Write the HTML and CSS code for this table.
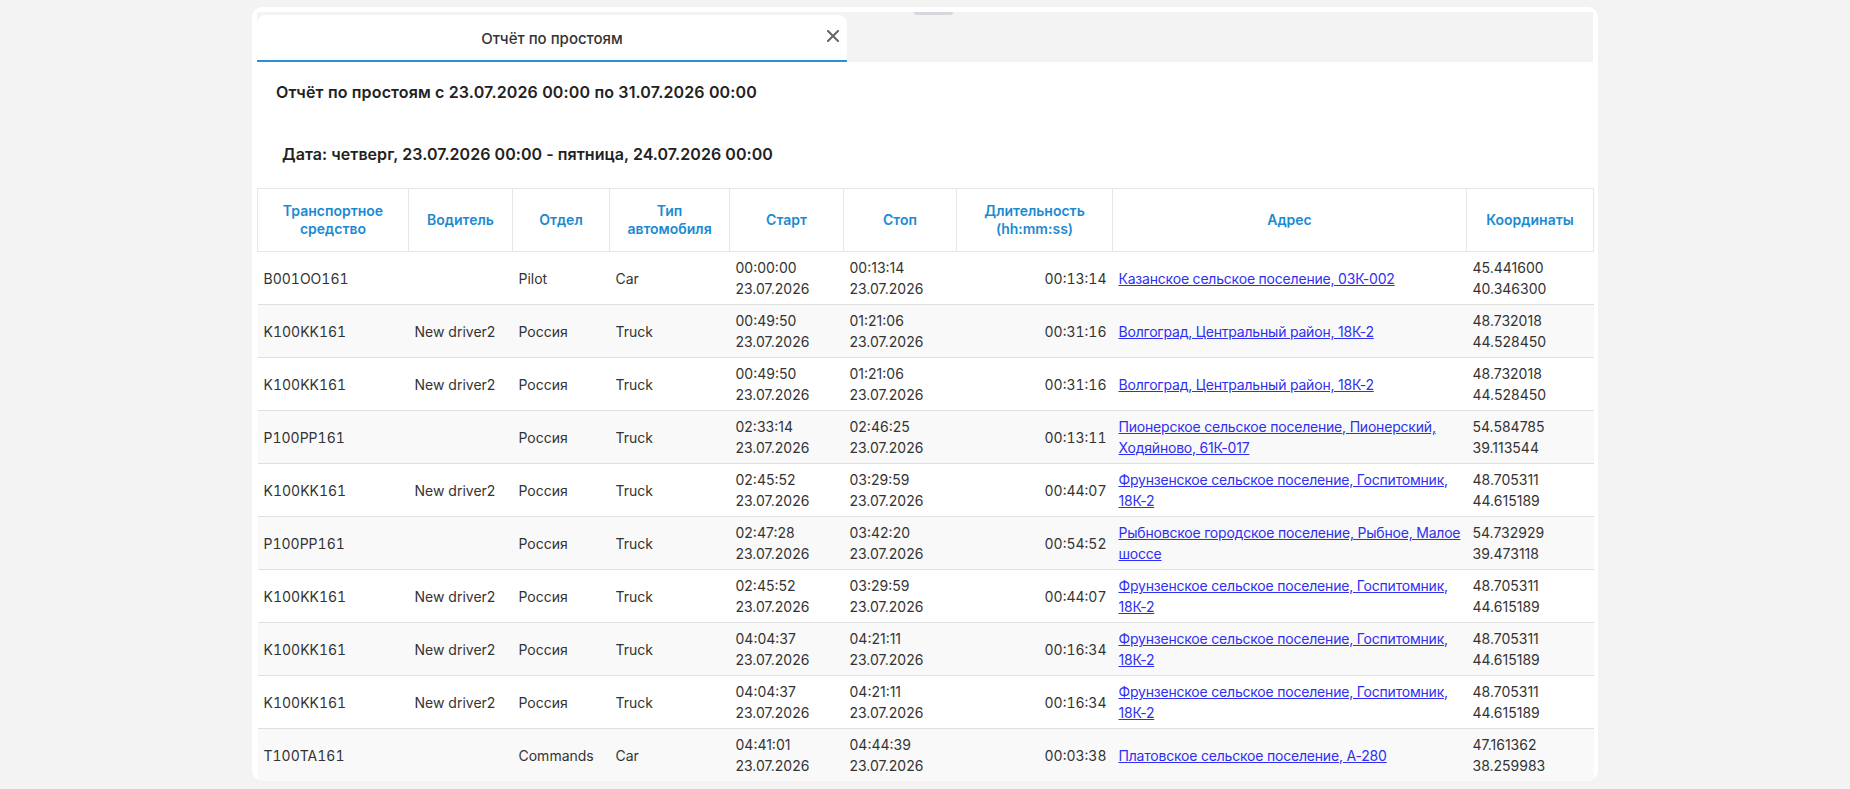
FILE: index.html
```html
<!DOCTYPE html>
<html lang="ru">
<head>
<meta charset="utf-8">
<title>Отчёт по простоям</title>
<link rel="stylesheet" href="styles.css">
</head>
<body>
<div class="card">
  <div class="handle"></div>
  <div class="tabbar">
    <div class="tab">
      <span class="tab-title">Отчёт по простоям</span>
      <svg class="close" width="12" height="12" viewBox="0 0 12 12"><path d="M1 1L11 11M11 1L1 11" stroke="#666" stroke-width="2" stroke-linecap="square"/></svg>
    </div>
  </div>
  <div class="content">
    <h1 class="title">Отчёт по простоям с 23.07.2026 00:00 по 31.07.2026 00:00</h1>
    <h2 class="subtitle">Дата: четверг, 23.07.2026 00:00 - пятница, 24.07.2026 00:00</h2>
    <table class="report">
      <colgroup>
        <col class="c1"><col class="c2"><col class="c3"><col class="c4"><col class="c5"><col class="c6"><col class="c7"><col class="c8"><col class="c9">
      </colgroup>
      <thead>
        <tr>
          <th>Транспортное<br>средство</th>
          <th>Водитель</th>
          <th>Отдел</th>
          <th>Тип<br>автомобиля</th>
          <th>Старт</th>
          <th>Стоп</th>
          <th>Длительность<br>(hh:mm:ss)</th>
          <th>Адрес</th>
          <th>Координаты</th>
        </tr>
      </thead>
      <tbody>
        <tr><td class="veh">B001OO161</td><td></td><td>Pilot</td><td>Car</td><td>00:00:00<br>23.07.2026</td><td>00:13:14<br>23.07.2026</td><td class="dur">00:13:14</td><td class="addr"><a href="#">Казанское сельское поселение, 03К-002</a></td><td>45.441600<br>40.346300</td></tr>
        <tr><td class="veh">K100KK161</td><td>New driver2</td><td>Россия</td><td>Truck</td><td>00:49:50<br>23.07.2026</td><td>01:21:06<br>23.07.2026</td><td class="dur">00:31:16</td><td class="addr"><a href="#">Волгоград, Центральный район, 18К-2</a></td><td>48.732018<br>44.528450</td></tr>
        <tr><td class="veh">K100KK161</td><td>New driver2</td><td>Россия</td><td>Truck</td><td>00:49:50<br>23.07.2026</td><td>01:21:06<br>23.07.2026</td><td class="dur">00:31:16</td><td class="addr"><a href="#">Волгоград, Центральный район, 18К-2</a></td><td>48.732018<br>44.528450</td></tr>
        <tr><td class="veh">P100PP161</td><td></td><td>Россия</td><td>Truck</td><td>02:33:14<br>23.07.2026</td><td>02:46:25<br>23.07.2026</td><td class="dur">00:13:11</td><td class="addr"><a href="#">Пионерское сельское поселение, Пионерский, Ходяйново, 61К-017</a></td><td>54.584785<br>39.113544</td></tr>
        <tr><td class="veh">K100KK161</td><td>New driver2</td><td>Россия</td><td>Truck</td><td>02:45:52<br>23.07.2026</td><td>03:29:59<br>23.07.2026</td><td class="dur">00:44:07</td><td class="addr"><a href="#">Фрунзенское сельское поселение, Госпитомник, 18К-2</a></td><td>48.705311<br>44.615189</td></tr>
        <tr><td class="veh">P100PP161</td><td></td><td>Россия</td><td>Truck</td><td>02:47:28<br>23.07.2026</td><td>03:42:20<br>23.07.2026</td><td class="dur">00:54:52</td><td class="addr"><a href="#">Рыбновское городское поселение, Рыбное, Малое шоссе</a></td><td>54.732929<br>39.473118</td></tr>
        <tr><td class="veh">K100KK161</td><td>New driver2</td><td>Россия</td><td>Truck</td><td>02:45:52<br>23.07.2026</td><td>03:29:59<br>23.07.2026</td><td class="dur">00:44:07</td><td class="addr"><a href="#">Фрунзенское сельское поселение, Госпитомник, 18К-2</a></td><td>48.705311<br>44.615189</td></tr>
        <tr><td class="veh">K100KK161</td><td>New driver2</td><td>Россия</td><td>Truck</td><td>04:04:37<br>23.07.2026</td><td>04:21:11<br>23.07.2026</td><td class="dur">00:16:34</td><td class="addr"><a href="#">Фрунзенское сельское поселение, Госпитомник, 18К-2</a></td><td>48.705311<br>44.615189</td></tr>
        <tr><td class="veh">K100KK161</td><td>New driver2</td><td>Россия</td><td>Truck</td><td>04:04:37<br>23.07.2026</td><td>04:21:11<br>23.07.2026</td><td class="dur">00:16:34</td><td class="addr"><a href="#">Фрунзенское сельское поселение, Госпитомник, 18К-2</a></td><td>48.705311<br>44.615189</td></tr>
        <tr><td class="veh">T100TA161</td><td></td><td>Commands</td><td>Car</td><td>04:41:01<br>23.07.2026</td><td>04:44:39<br>23.07.2026</td><td class="dur">00:03:38</td><td class="addr"><a href="#">Платовское сельское поселение, А-280</a></td><td>47.161362<br>38.259983</td></tr>
      </tbody>
    </table>
  </div>
</div>
</body>
</html>
```

FILE: styles.css
```css
* { box-sizing: border-box; }
html, body { margin: 0; padding: 0; }
body {
  background: #f3f3f3;
  font-family: Inter, "Noto Sans", sans-serif;
  color: #333;
  height: 789px;
  overflow: hidden;
  padding-top: 7px;
}
.card {
  position: relative;
  width: 1346px;
  height: 774px;
  margin: 0 auto;
  background: #fff;
  border-radius: 10px;
  padding: 5px 5px 0 5px;
  overflow: hidden;
}
.handle {
  position: absolute;
  left: 662px;
  top: 5px;
  width: 39px;
  height: 3px;
  background: #d6d6dd;
  border-radius: 0 0 3px 3px;
}
.tabbar {
  display: flex;
  align-items: flex-end;
  height: 50px;
  background: #f3f3f3;
}
.tab {
  position: relative;
  width: 590px;
  height: 47px;
  background: #fff;
  border-radius: 8px 8px 0 0;
  border-bottom: 2px solid #2a8fd3;
  display: flex;
  align-items: center;
  justify-content: center;
}
.tab-title {
  font-size: 15px;
  font-weight: 500;
  color: #333;
  padding-top: 1px;
}
.close {
  position: absolute;
  right: 8px;
  top: 15px;
}
.content {
  padding-top: 18px;
}
.title {
  margin: 0 0 38px 19px;
  font-size: 16px;
  line-height: 24px;
  font-weight: 600;
  letter-spacing: 0.15px;
  color: #222;
}
.subtitle {
  margin: 0 0 22px 25px;
  font-size: 16px;
  line-height: 24px;
  font-weight: 600;
  letter-spacing: 0.05px;
  color: #222;
}
.report {
  width: 1336px;
  table-layout: fixed;
  border-collapse: collapse;
  font-size: 14px;
}
.c1 { width: 151px; }
.c2 { width: 104px; }
.c3 { width: 97px; }
.c4 { width: 120px; }
.c5 { width: 114px; }
.c6 { width: 113px; }
.c7 { width: 156px; }
.c8 { width: 354px; }
.c9 { width: 127px; }
.report th {
  border: 1px solid #e6e6e6;
  padding: 13px 6px;
  line-height: 18px;
  font-weight: 600;
  font-size: 14px;
  color: #1b8ad2;
  text-align: center;
  vertical-align: middle;
}
.report td {
  padding: 5px 6px;
  line-height: 21px;
  vertical-align: middle;
  text-align: left;
  border-bottom: 1px solid #e0e0e0;
  color: #333;
}
.report tbody tr:nth-child(even) td { background: #f9f9f9; }
.report td.veh { font-variant-numeric: tabular-nums; }
.report td.dur { text-align: right; font-variant-numeric: tabular-nums; }
.report td.addr { padding-right: 4px; }
.report a {
  color: #2f2ff2;
  text-decoration: underline;
  letter-spacing: -0.2px;
}
```
